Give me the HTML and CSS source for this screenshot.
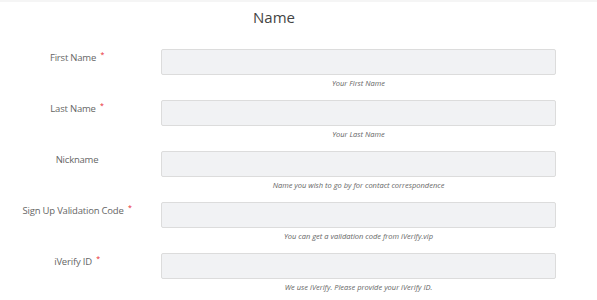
FILE: index.html
```html
<!DOCTYPE html>
<html lang="en">
<head>
    <meta charset="UTF-8">
    <title>Name</title>
    <link rel="stylesheet" href="styles.css">
</head>
<body>
    <div class="page">
        <h2 class="section-title">Name</h2>

        <form class="form">
            <div class="field">
                <label class="field-label">First Name <span class="req">*</span></label>
                <div class="field-body">
                    <input class="field-input" type="text">
                    <div class="field-help">Your First Name</div>
                </div>
            </div>

            <div class="field">
                <label class="field-label">Last Name <span class="req">*</span></label>
                <div class="field-body">
                    <input class="field-input" type="text">
                    <div class="field-help">Your Last Name</div>
                </div>
            </div>

            <div class="field">
                <label class="field-label">Nickname</label>
                <div class="field-body">
                    <input class="field-input" type="text">
                    <div class="field-help">Name you wish to go by for contact correspondence</div>
                </div>
            </div>

            <div class="field">
                <label class="field-label">Sign Up Validation Code <span class="req">*</span></label>
                <div class="field-body">
                    <input class="field-input" type="text">
                    <div class="field-help">You can get a validation code from iVerify.vip</div>
                </div>
            </div>

            <div class="field">
                <label class="field-label">iVerify ID <span class="req">*</span></label>
                <div class="field-body">
                    <input class="field-input" type="text">
                    <div class="field-help">We use iVerify. Please provide your iVerify ID.</div>
                </div>
            </div>
        </form>
    </div>
</body>
</html>
```

FILE: styles.css
```css
body {
    margin: 0;
    font-family: "Open Sans", Arial, sans-serif;
    background-color: #fff;
    color: #666;
    border-top: 2px solid #f5f5f5;
}

.page {
    width: 556px;
    padding-top: 5px;
}

.section-title {
    margin: 0 0 22px 0;
    padding-right: 8px;
    text-align: center;
    font-size: 15px;
    font-weight: normal;
    color: #444;
    line-height: 20px;
}

.form {
    display: flex;
    flex-direction: column;
    gap: 8px;
}

.field {
    display: grid;
    grid-template-columns: 154px 1fr;
    column-gap: 7px;
}

.field-label {
    text-align: center;
    font-size: 9.5px;
    letter-spacing: -0.2px;
    line-height: 16px;
    padding-top: 1px;
    color: #666;
}

.req {
    color: #e8262d;
    font-size: 7px;
    line-height: 10px;
    vertical-align: top;
    margin-left: 2px;
}

.field-body {
    display: flex;
    flex-direction: column;
}

.field-input {
    box-sizing: border-box;
    height: 26px;
    margin: 0;
    border: 1px solid #dcdcdc;
    border-radius: 2px;
    background-color: #f1f2f4;
}

.field-help {
    text-align: center;
    font-size: 7.5px;
    font-style: italic;
    line-height: 17px;
    color: #666;
}
```
